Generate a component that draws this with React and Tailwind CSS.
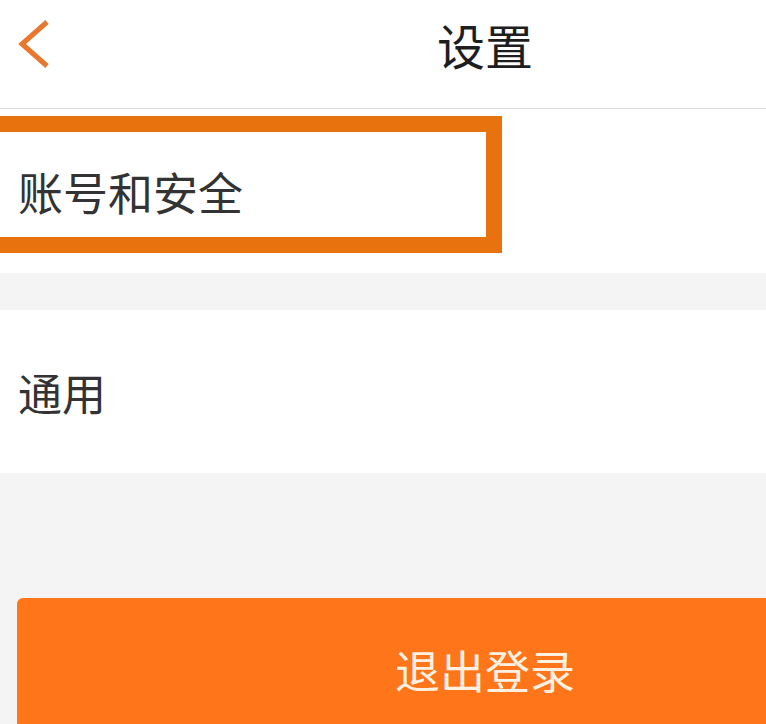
export default function App() {
  const font = { fontFamily: '"Noto Sans CJK SC", "Noto Sans", sans-serif' };
  return (
    <div className="w-[766px] h-[724px] overflow-hidden bg-[#f4f4f4] text-[#333333]" style={font}>
      <div className="h-[108px] bg-white flex items-center relative">
        <svg className="absolute left-[14px] top-[18px]" width="40" height="52" viewBox="0 0 40 52">
          <polyline points="33,4 8,26 33,48" fill="none" stroke="#e8782e" strokeWidth="5" strokeLinecap="butt" strokeLinejoin="miter" />
        </svg>
        <div className="flex-1 flex justify-center pl-[204px] pb-[20px] text-[48px] leading-none text-[#1e1e1e]">设置</div>
      </div>
      <div className="h-px bg-[#dcdcdc]" />
      <div className="relative h-[164px] bg-white flex items-center px-[18px] text-[45px] leading-none">
        <span>账号和安全</span>
        <div className="absolute left-[-20px] top-[7px] w-[522px] h-[137px] border-[16px] border-[#e8730e]" />
      </div>
      <div className="h-[37px]" />
      <div className="h-[163px] bg-white flex items-center px-[18px] text-[44px] leading-none">
        <span>通用</span>
      </div>
      <div className="h-[125px]" />
      <div className="ml-[17px] h-[200px] rounded-tl-[6px] bg-[#ff7519] flex items-start justify-center pl-[187px] pt-[49px]">
        <span className="text-[45px] leading-none text-[#fff1e2]">退出登录</span>
      </div>
    </div>
  );
}
